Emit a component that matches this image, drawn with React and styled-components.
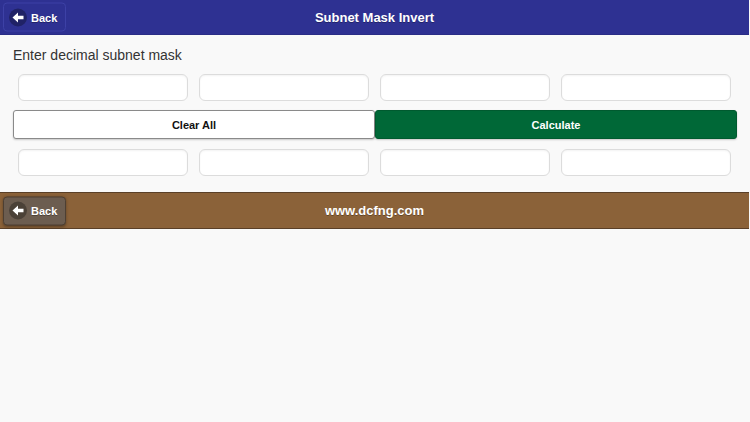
import React from 'react';
import styled, { createGlobalStyle } from 'styled-components';

const GlobalStyle = createGlobalStyle`
  html, body {
    margin: 0;
    padding: 0;
    background: #f9f9f9;
    font-family: "Liberation Sans", Arial, sans-serif;
  }
`;

const Page = styled.div`
  width: 750px;
  min-height: 422px;
  background: #f9f9f9;
`;

const Bar = styled.div`
  position: relative;
  display: flex;
  align-items: center;
  justify-content: center;
  height: ${p => p.height}px;
  width: 749px;
  box-sizing: border-box;
  background: ${p => p.bg};
  border-top: ${p => (p.footer ? '1px solid #5a4028' : 'none')};
  border-bottom: 1px solid ${p => (p.footer ? '#5a4028' : '#2a2d86')};
  color: #fff;
`;

const BarTitle = styled.h1`
  margin: 0;
  font-size: 13px;
  font-weight: 700;
  color: #fff;
  text-shadow: 0 1px 0 rgba(0, 0, 0, 0.3);
`;

const BackButton = styled.button`
  position: absolute;
  left: 3px;
  top: 50%;
  transform: translateY(-50%);
  display: flex;
  align-items: center;
  gap: 4px;
  width: 63px;
  height: 29px;
  padding: 0 0 0 5px;
  border-radius: 4px;
  border: 1px solid ${p => p.borderColor};
  background: ${p => p.bg};
  color: #fff;
  font-family: inherit;
  font-size: 11px;
  font-weight: 700;
  text-shadow: 0 1px 0 rgba(0, 0, 0, 0.3);
  box-shadow: ${p => (p.shadow ? '0 1px 3px rgba(0,0,0,0.35)' : 'none')};
  cursor: pointer;
`;

const ArrowDot = styled.span`
  display: flex;
  align-items: center;
  justify-content: center;
  width: 18px;
  height: 18px;
  border-radius: 50%;
  background: rgba(0, 0, 0, 0.3);
`;

const Content = styled.main`
  padding: 12px 13px 16px;
`;

const Label = styled.label`
  display: block;
  font-size: 14px;
  line-height: 16px;
  color: #333;
  margin: 0 0 11px;
`;

const InputRow = styled.div`
  display: grid;
  grid-template-columns: repeat(4, 170px);
  gap: 11px;
  padding: 0 5px;
`;

const Field = styled.input`
  box-sizing: border-box;
  width: 170px;
  height: 27px;
  border: 1px solid #dcdcdc;
  border-radius: 6px;
  background: #fff;
  box-shadow: inset 0 1px 2px rgba(0, 0, 0, 0.05);
  outline: none;
  font-family: inherit;
`;

const ButtonRow = styled.div`
  display: grid;
  grid-template-columns: 1fr 1fr;
  margin: 9px 0 10px;
`;

const ActionButton = styled.button`
  height: 29px;
  border-radius: 3px;
  border: 1px solid ${p => (p.primary ? '#005a2f' : '#8a8a8a')};
  background: ${p => (p.primary ? '#006837' : '#fff')};
  color: ${p => (p.primary ? '#fff' : '#111')};
  font-family: inherit;
  font-size: 11px;
  font-weight: 700;
  box-shadow: 0 1px 2px rgba(0, 0, 0, 0.2);
  cursor: pointer;
`;

const Arrow = () => (
  <ArrowDot>
    <svg width="12" height="12" viewBox="0 0 12 12">
      <path d="M0.5 6 L6 1 V4.2 H11.5 V7.8 H6 V11 Z" fill="#fff" />
    </svg>
  </ArrowDot>
);

export default function App() {
  return (
    <Page>
      <GlobalStyle />
      <Bar height={35} bg="#2e3192">
        <BackButton bg="#2e3192" borderColor="#3d41a6">
          <Arrow />
          Back
        </BackButton>
        <BarTitle>Subnet Mask Invert</BarTitle>
      </Bar>

      <Content>
        <Label>Enter decimal subnet mask</Label>
        <InputRow>
          <Field />
          <Field />
          <Field />
          <Field />
        </InputRow>
        <ButtonRow>
          <ActionButton>Clear All</ActionButton>
          <ActionButton primary>Calculate</ActionButton>
        </ButtonRow>
        <InputRow>
          <Field />
          <Field />
          <Field />
          <Field />
        </InputRow>
      </Content>

      <Bar height={37} bg="#8b6239" footer>
        <BackButton bg="#6c5d50" borderColor="#4d3f33" shadow>
          <Arrow />
          Back
        </BackButton>
        <BarTitle>www.dcfng.com</BarTitle>
      </Bar>
    </Page>
  );
}
